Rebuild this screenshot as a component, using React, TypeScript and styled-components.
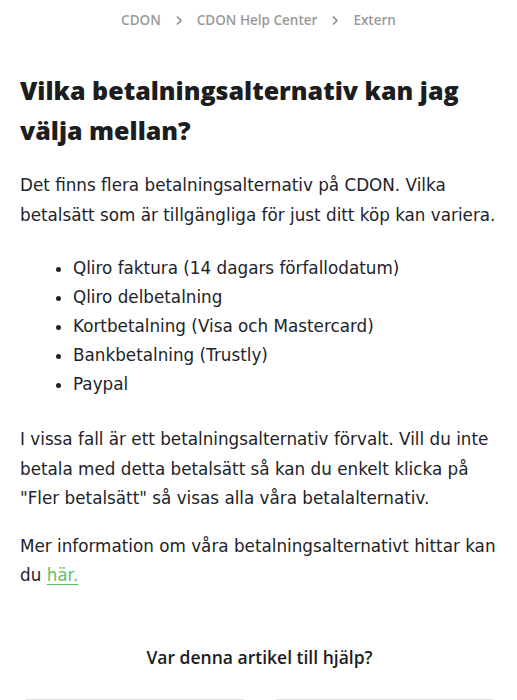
import React from "react";
import styled, { createGlobalStyle } from "styled-components";

const GlobalStyle = createGlobalStyle`
  body {
    margin: 0;
    background: #ffffff;
    font-family: "Open Sans", "Noto Sans", sans-serif;
    color: #1c1d21;
  }
`;

const crumbs = ["CDON", "CDON Help Center", "Extern"];

const options = [
  "Qliro faktura (14 dagars förfallodatum)",
  "Qliro delbetalning",
  "Kortbetalning (Visa och Mastercard)",
  "Bankbetalning (Trustly)",
  "Paypal",
];

const Chevron = () => (
  <svg width="8" height="11" viewBox="0 0 8 11">
    <path d="M2 1.5 L6 5.5 L2 9.5" fill="none" stroke="#8d8d8d" strokeWidth="1.6" />
  </svg>
);

const App: React.FC = () => {
  return (
    <Page>
      <GlobalStyle />
      <Breadcrumbs>
        {crumbs.map((c, i) => (
          <React.Fragment key={c}>
            {i > 0 && (
              <Sep>
                <Chevron />
              </Sep>
            )}
            <Crumb>{c}</Crumb>
          </React.Fragment>
        ))}
      </Breadcrumbs>
      <Article>
        <Title>Vilka betalningsalternativ kan jag välja mellan?</Title>
        <Text>
          Det finns flera betalningsalternativ på CDON. Vilka betalsätt som är
          tillgängliga för just ditt köp kan variera.
        </Text>
        <List>
          {options.map((o) => (
            <Item key={o}>{o}</Item>
          ))}
        </List>
        <Text>
          I vissa fall är ett betalningsalternativ förvalt. Vill du inte betala
          med detta betalsätt så kan du enkelt klicka på "Fler betalsätt" så
          visas alla våra betalalternativ.
        </Text>
        <Text>
          Mer information om våra betalningsalternativt hittar kan du{" "}
          <Link href="#">här.</Link>
        </Text>
      </Article>
      <Feedback>
        <Question>Var denna artikel till hjälp?</Question>
        <Buttons>
          <VoteButton>Ja</VoteButton>
          <VoteButton>Nej</VoteButton>
        </Buttons>
      </Feedback>
    </Page>
  );
};

const Page = styled.div`
  width: 517px;
  box-sizing: border-box;
  padding: 0 18px 0 20px;
`;

const Breadcrumbs = styled.nav`
  display: flex;
  justify-content: center;
  align-items: center;
  height: 40px;
  gap: 12px;
  margin-left: -2px;
`;

const Crumb = styled.span`
  font-size: 13.5px;
  font-weight: 600;
  color: #9a9a9a;
`;

const Sep = styled.span`
  display: flex;
  align-items: center;
  margin: 0 2px;
`;

const Article = styled.article`
  padding-top: 30px;
`;

const Title = styled.h1`
  margin: 0 0 21px;
  font-size: 25px;
  line-height: 40px;
  font-weight: 800;
  color: #1c1d21;
`;

const Text = styled.p`
  margin: 0 0 18px;
  font-family: "DejaVu Sans", "Open Sans", sans-serif;
  font-size: 16.8px;
  line-height: 29.5px;
  color: #222328;
`;

const List = styled.ul`
  margin: 24px 0 26px;
  padding-left: 53px;
  font-family: "DejaVu Sans", "Open Sans", sans-serif;
  font-size: 16.8px;
  line-height: 29px;
  color: #222328;
`;

const Item = styled.li`
  padding-left: 0;
`;

const Link = styled.a`
  color: #5cbf6a;
  text-decoration: underline;
  text-underline-offset: 3px;
`;

const Feedback = styled.section`
  padding-top: 36px;
  text-align: center;
`;

const Question = styled.h2`
  margin: 0 0 30px;
  font-size: 17.5px;
  font-weight: 600;
`;

const Buttons = styled.div`
  display: grid;
  grid-template-columns: 1fr 1fr;
  gap: 24px;
  padding: 0 2px;
`;

const VoteButton = styled.button`
  height: 44px;
  border: 1px solid #dedede;
  border-radius: 6px;
  background: #fff;
  font-family: inherit;
  font-size: 16px;
  color: #1c1d21;
`;

export default App;
